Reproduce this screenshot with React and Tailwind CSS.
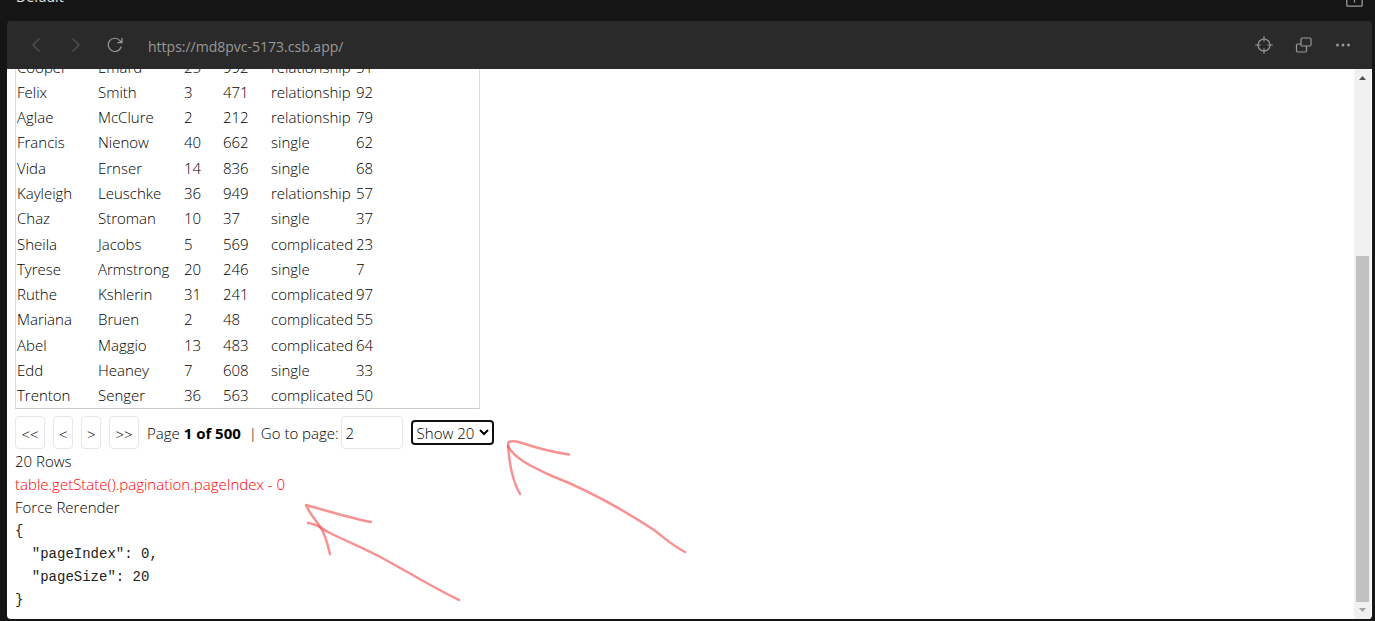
import { useState } from "react";

const people = [
  ["Cooper", "Emard", 25, 992, "relationship", 51],
  ["Felix", "Smith", 3, 471, "relationship", 92],
  ["Aglae", "McClure", 2, 212, "relationship", 79],
  ["Francis", "Nienow", 40, 662, "single", 62],
  ["Vida", "Ernser", 14, 836, "single", 68],
  ["Kayleigh", "Leuschke", 36, 949, "relationship", 57],
  ["Chaz", "Stroman", 10, 37, "single", 37],
  ["Sheila", "Jacobs", 5, 569, "complicated", 23],
  ["Tyrese", "Armstrong", 20, 246, "single", 7],
  ["Ruthe", "Kshlerin", 31, 241, "complicated", 97],
  ["Mariana", "Bruen", 2, 48, "complicated", 55],
  ["Abel", "Maggio", 13, 483, "complicated", 64],
  ["Edd", "Heaney", 7, 608, "single", 33],
  ["Trenton", "Senger", 36, 563, "complicated", 50],
];

function TopBar() {
  return (
    <header className="flex h-[21px] shrink-0 items-end justify-between overflow-hidden pl-4 pr-3 text-[14px] leading-5 text-[#e5e5e5]">
      <span className="pb-[14px]">Default</span>
      <button type="button" aria-label="Open preview" className="pb-[14px]">
        <svg width="17" height="16" viewBox="0 0 17 16" fill="none" stroke="#9a9a9a" strokeWidth="1.3">
          <path d="M.8 0v14.2q0 1 1 1h13.400q1 0 1-1V0M8.500 4v7.500" />
        </svg>
      </button>
    </header>
  );
}

function BrowserBar() {
  return (
    <nav className="flex h-12 shrink-0 items-center rounded-t bg-[#2a2a2a] pl-[22px] pr-[21px] text-[#999999]">
      <div className="flex items-center gap-6">
        <button type="button" aria-label="Back" className="text-[#555555]">
          <svg width="15" height="16" viewBox="0 0 15 16" fill="none" stroke="currentColor" strokeWidth="1.2">
            <path d="M10.500 1.500 4 8l6.500 6.500" />
          </svg>
        </button>
        <button type="button" aria-label="Forward" className="text-[#555555]">
          <svg width="15" height="16" viewBox="0 0 15 16" fill="none" stroke="currentColor" strokeWidth="1.2">
            <path d="m4.500 1.500 6.500 6.500-6.500 6.500" />
          </svg>
        </button>
        <button type="button" aria-label="Reload">
          <svg width="16" height="16" viewBox="0 0 16 16" fill="none" stroke="currentColor" strokeWidth="1.2">
            <path d="M14.200 9.500A6.600 6.600 0 1 1 13 3.800l1.800 1.700M15 1v4.700h-4.700" />
          </svg>
        </button>
      </div>
      <span className="flex-1 pl-[25px] pt-[2px] text-[14px]">https://md8pvc-5173.csb.app/</span>
      <div className="flex items-center gap-[22px]">
        <button type="button" aria-label="Inspect">
          <svg width="18" height="18" viewBox="0 0 18 18" fill="none" stroke="currentColor" strokeWidth="1.2">
            <circle cx="9" cy="9" r="6" />
            <path d="M9 .3v5.200M9 12.500v5.200M.3 9h5.200M12.500 9h5.200" />
          </svg>
        </button>
        <button type="button" aria-label="Duplicate">
          <svg width="18" height="18" viewBox="0 0 18 18" fill="none" stroke="currentColor" strokeWidth="1.2">
            <rect x="6" y="2" width="10" height="8" rx="1.200" />
            <path d="M6 8H2.700Q1.500 8 1.500 9.200v5.600Q1.500 16 2.700 16h7.600q1.200 0 1.200-1.200V10" />
          </svg>
        </button>
        <button type="button" aria-label="More">
          <svg width="16" height="16" viewBox="0 0 16 16" fill="currentColor">
            <circle cx="2.500" cy="8" r="1.500" />
            <circle cx="8" cy="8" r="1.500" />
            <circle cx="13.500" cy="8" r="1.500" />
          </svg>
        </button>
      </div>
    </nav>
  );
}

function PeopleTable() {
  return (
    <table className="h-[356px] w-[465px] shrink-0 table-fixed border-separate border-spacing-0 border border-[#dcdcdc] border-b-[#c8c8c8]">
      <colgroup>
        <col className="w-[81px]" />
        <col className="w-[86px]" />
        <col className="w-[39px]" />
        <col className="w-[48px]" />
        <col className="w-[85px]" />
        <col />
      </colgroup>
      <tbody>
        {people.map((person) => (
          <tr key={person[0]}>
            {person.map((value, i) => (
              <td key={i} className="whitespace-nowrap px-px pb-0 pt-px">
                {value}
              </td>
            ))}
          </tr>
        ))}
      </tbody>
    </table>
  );
}

function Pagination() {
  const [page, setPage] = useState("2");
  const [pageSize, setPageSize] = useState("20");
  const buttonClass = "h-[33px] rounded border border-gray-200 px-[5px]";

  return (
    <div className="mt-[7px] flex h-[34px] shrink-0 items-start gap-2 whitespace-nowrap leading-[34px]">
      <button type="button" className={`${buttonClass} w-[30px]`}>{"<<"}</button>
      <button type="button" className={`${buttonClass} w-5`}>{"<"}</button>
      <button type="button" className={`${buttonClass} w-5`}>{">"}</button>
      <button type="button" className={`${buttonClass} w-[30px]`}>{">>"}</button>
      <span>
        Page <strong className="font-bold">1 of 500</strong>
      </span>
      <span className="flex gap-[2px]">
        <label htmlFor="page">| Go to page:</label>
        <input
          id="page"
          type="text"
          inputMode="numeric"
          value={page}
          onChange={(e) => setPage(e.target.value)}
          className="h-[33px] w-[62px] rounded border border-gray-200 px-1"
        />
      </span>
      <select
        aria-label="Page size"
        value={pageSize}
        onChange={(e) => setPageSize(e.target.value)}
        className="mt-1 h-[25px] w-[83px] rounded border-2 border-[#101010] leading-[21px]"
      >
        {[10, 20, 30, 40, 50].map((size) => (
          <option key={size} value={size}>
            Show {size}
          </option>
        ))}
      </select>
    </div>
  );
}

function Scrollbar() {
  return (
    <div className="mr-px flex w-[17px] shrink-0 flex-col items-center bg-[#f1f1f1]">
      <svg className="shrink-0" width="17" height="17" viewBox="0 0 17 17" fill="#505050">
        <path d="M5 11h7L8.500 7z" />
      </svg>
      <div className="flex w-full flex-1 flex-col justify-end px-[2px]">
        <div className="h-[67%] bg-[#c1c1c1]" />
      </div>
      <svg className="shrink-0" width="17" height="17" viewBox="0 0 17 17" fill="#a3a3a3">
        <path d="M5 6h7l-3.500 4z" />
      </svg>
    </div>
  );
}

// hand drawn arrows lying over the page
function Arrows() {
  return (
    <svg
      className="pointer-events-none absolute left-0 top-0"
      width="700"
      height="621"
      viewBox="0 0 700 621"
      fill="none"
      stroke="#f04a4a"
      strokeOpacity="0.6"
      strokeWidth="2.500"
      strokeLinecap="round"
      strokeLinejoin="round"
    >
      <path d="M569 454.500C552 452 540 449 522 443C514 440 508 441 508 444C509 462 512 480 520 494" />
      <path d="M508 446C514 458 530 466 552 476C588 490 625 511 654 530C666 539 670 544 685 552" />
      <path d="M371 522C350 518 328 511 306 505C310 515 318 522 323 532C327 540 328 547 330 554" />
      <path d="M308 523C318 524 322 529 330 533C346 541 366 549 384 559C408 572 434 588 459 600" />
    </svg>
  );
}

export default function App() {
  return (
    <div className="relative flex h-screen flex-col overflow-hidden bg-[#151515] pb-[2px] pl-[7px] pr-[3px] font-['Open_Sans','Noto_Sans',sans-serif]">
      <div className="-ml-[7px] -mr-[3px]">
        <TopBar />
      </div>
      <BrowserBar />
      <div className="flex min-h-0 flex-1 overflow-hidden rounded-b bg-white">
        <main className="flex min-w-0 flex-1 flex-col justify-end overflow-hidden px-2 pb-[7px] text-[15px] font-[350] leading-[23px] text-black">
          <PeopleTable />
          <Pagination />
          <div>20 Rows</div>
          <div className="text-[#ff0000]">table.getState().pagination.pageIndex - 0</div>
          <div>
            <button type="button">Force Rerender</button>
          </div>
          <pre className="mt-px font-['Liberation_Mono',monospace] text-[14px] font-normal text-[#222222]">
            {JSON.stringify({ pageIndex: 0, pageSize: 20 }, null, 2)}
          </pre>
        </main>
        <Scrollbar />
      </div>
      <Arrows />
    </div>
  );
}
